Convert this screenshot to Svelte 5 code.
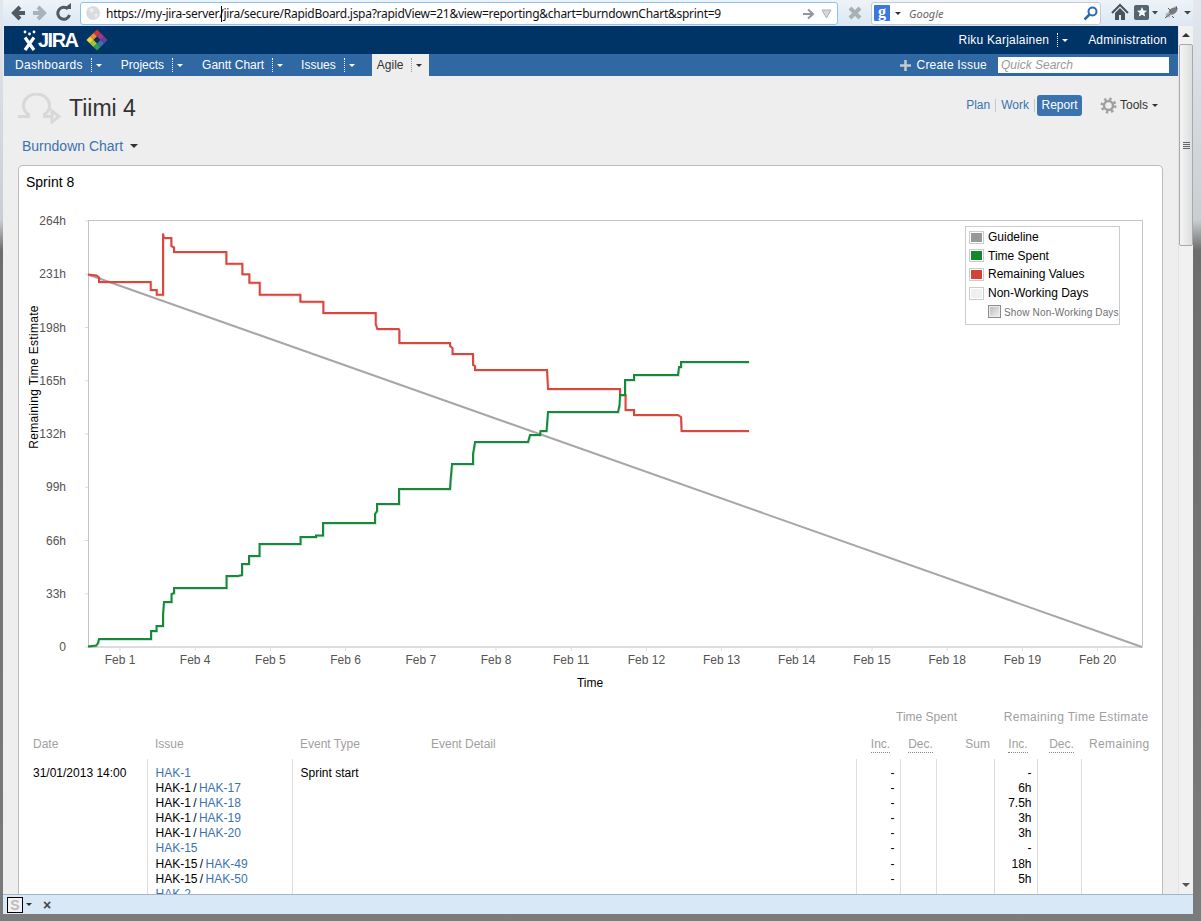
<script lang="ts">
	// Burndown report page inside a Firefox window. Chart is an svg drawn in page
	// coordinates (the group below shifts them into the card), legend sits on top of it.
	const navItems = ['Dashboards', 'Projects', 'Gantt Chart', 'Issues'];

	const yTicks = ['0', '33h', '66h', '99h', '132h', '165h', '198h', '231h', '264h'];
	const xTicks = [
		'Feb 1', 'Feb 4', 'Feb 5', 'Feb 6', 'Feb 7', 'Feb 8', 'Feb 11',
		'Feb 12', 'Feb 13', 'Feb 14', 'Feb 15', 'Feb 18', 'Feb 19', 'Feb 20'
	];

	const remaining =
		'88,274.5 96.5,275.5 99,277.5 99,282 150.7,282 150.7,290 156.7,290 156.7,294.7 163,294.7 163,233.5 163.7,238 171.3,238 171.3,246 174,247.3 174,252 226.3,252 226.3,263.7 242.3,263.7 242.3,274.3 249.3,274.3 249.3,282.7 259.7,282.7 259.7,294.7 300.3,294.7 300.3,301.7 323.3,301.7 323.3,313 375.7,313 375.7,324.3 377.3,329 398.7,329 399.3,330 399.3,343 450,343 450,346 452.5,348 452.5,354 473,354 473,365 475,366 475,370 547,370 547.5,380 548,389 620,389 620,395 625.5,395 625.5,410 634,410 634,415 678,415 681,417 681.5,431 749,431';
	const spent =
		'88,646.5 96,645.5 98,643 99,639 151,639 151,631 156.5,631 156.5,626 163,626 163,614 164,602 171.5,602 171.5,594 174,593 174,588 226.5,588 226.5,576 238,576 242,575 242,564 249,564 249,556 259.5,556 259.5,544 300.5,544 300.5,537 316,537 316,535.5 323,535.5 323,523 375,523 375,514 377,511 377,504 399,504 399,489 450,489 450.5,481 452,464 473,464 473,454 475,442 528,442 530,435 540,435 540.5,431 546.5,431 548,412 618,412 619.5,405 620,395 625,395 625,380 634,380 634,375 678,375 679,367 681,367 681,362 749,362';

	const legend = [
		{ label: 'Guideline', cls: 'grey' },
		{ label: 'Time Spent', cls: 'green' },
		{ label: 'Remaining Values', cls: 'red' },
		{ label: 'Non-Working Days', cls: 'blank' }
	];

	const rows = [
		{ parent: '', key: 'HAK-1', inc: '-', rem: '-' },
		{ parent: 'HAK-1', key: 'HAK-17', inc: '-', rem: '6h' },
		{ parent: 'HAK-1', key: 'HAK-18', inc: '-', rem: '7.5h' },
		{ parent: 'HAK-1', key: 'HAK-19', inc: '-', rem: '3h' },
		{ parent: 'HAK-1', key: 'HAK-20', inc: '-', rem: '3h' },
		{ parent: '', key: 'HAK-15', inc: '-', rem: '-' },
		{ parent: 'HAK-15', key: 'HAK-49', inc: '-', rem: '18h' },
		{ parent: 'HAK-15', key: 'HAK-50', inc: '-', rem: '5h' },
		{ parent: '', key: 'HAK-2', inc: '-', rem: '-' }
	];
</script>

<div class="window">
	<div class="toolbar">
		<svg class="tb-nav" width="74" height="26" viewBox="0 0 74 26">
			<path d="M20 13H10M15 7l-6 6 6 6" fill="none" stroke="#4f5a63" stroke-width="4" />
			<path d="M28 13h10M33 7l6 6-6 6" fill="none" stroke="#a9b2ba" stroke-width="4" />
			<path d="M63 9a6 6 0 1 0 1.500 6" fill="none" stroke="#4f5a63" stroke-width="3" />
			<path d="M58 9h8V3z" fill="#4f5a63" />
		</svg>
		<div class="urlbar">
			<svg class="globe" width="14" height="14" viewBox="0 0 14 14">
				<circle cx="7" cy="7" r="7" fill="#d9dcdf" />
				<path d="M3 3l4-1 1 3-3 2zM8 8l4 0-2 4z" fill="#eceef0" />
			</svg>
			<span class="url">https://my-jira-server/jira/secure/RapidBoard.jspa?rapidView=21&amp;view=reporting&amp;chart=burndownChart&amp;sprint=9</span>
			<span class="caret"></span>
			<svg class="url-go" width="30" height="12" viewBox="0 0 30 12">
				<path d="M0 6h9M5 1.500 10 6l-5 4.500" fill="none" stroke="#8f979e" stroke-width="2" />
				<path d="M19 2h9l-4.500 8z" fill="#d3d8dc" stroke="#aab1b7" />
			</svg>
		</div>
		<svg class="stop" width="14" height="14" viewBox="0 0 14 14">
			<path d="M2 2l10 10M12 2 2 12" stroke="#a9b0b6" stroke-width="4" />
		</svg>
		<div class="searchbar">
			<span class="engine">g</span>
			<span class="mini-arrow dark"></span>
			<span class="google">Google</span>
			<svg class="lens" width="15" height="15" viewBox="0 0 15 15">
				<circle cx="9.500" cy="5.500" r="4" fill="none" stroke="#2b6cab" stroke-width="2" />
				<path d="M6.500 8.500 1.500 13.500" stroke="#2b6cab" stroke-width="2.500" />
			</svg>
		</div>
		<svg class="tb-right" width="83" height="26" viewBox="0 0 83 26">
			<path d="M2 13 10 5l8 8" fill="none" stroke="#46525c" stroke-width="2" />
			<path d="M5 13v7h4v-5h2v5h4v-7l-5-5z" fill="#46525c" />
			<rect x="24" y="5" width="15" height="15" rx="2" fill="#566470" />
			<path d="M32 7l1.500 3.500 3.500.3-2.700 2.300.9 3.400-3.200-1.800-3.200 1.800.9-3.400-2.700-2.300 3.500-.3z" fill="#fff" />
			<path d="M42 11h6l-3 3.500z" fill="#3c464e" />
			<ellipse cx="63" cy="11" rx="5" ry="3" fill="#777b7f" transform="rotate(-35 63 11)" />
			<circle cx="58" cy="15" r="2.500" fill="#b4b7ba" />
			<path d="M55 18l5-4M66 6l1 3M58 8l3 3M62 16l2 2" stroke="#55595c" />
			<path d="M74 11h7l-3.500 3.500z" fill="#3c464e" />
		</svg>
	</div>

	<div class="content">
		<div class="page">
			<header class="topbar">
				<div class="logo">
					<svg width="15" height="21" viewBox="0 0 15 21">
						<circle cx="3" cy="2" r="1.400" fill="#fff" />
						<circle cx="7.500" cy="4" r="1.400" fill="#fff" />
						<circle cx="12" cy="2" r="1.400" fill="#fff" />
						<path d="M3 7.500 12 20M12 7.500 3 20" stroke="#fff" stroke-width="3.200" />
					</svg>
					<span class="logo-text">JIRA</span>
					<svg class="diamond" width="22" height="22" viewBox="-11 -11 22 22">
						<g transform="rotate(45) translate(-7.500 -7.500)">
							<rect x="0" y="0" width="5" height="5" fill="#d3343a" />
							<rect x="5" y="0" width="5" height="5" fill="#a33a86" />
							<rect x="10" y="0" width="5" height="5" fill="#6a3f98" />
							<rect x="0" y="5" width="5" height="5" fill="#ee8a2a" />
							<rect x="5" y="5" width="5" height="5" fill="#10305a" />
							<rect x="10" y="5" width="5" height="5" fill="#3d6fb5" />
							<rect x="0" y="10" width="5" height="5" fill="#f4d63c" />
							<rect x="5" y="10" width="5" height="5" fill="#a0c63c" />
							<rect x="10" y="10" width="5" height="5" fill="#2f9e50" />
						</g>
					</svg>
				</div>
				<div class="user">
					<span>Riku Karjalainen</span>
					<span class="divider"></span>
					<span class="mini-arrow"></span>
					<span class="admin">Administration</span>
				</div>
			</header>

			<nav class="mainnav">
				{#each navItems as item}
					<span class="nav-item">
						{item}
						<span class="divider"></span>
						<span class="mini-arrow"></span>
					</span>
				{/each}
				<span class="nav-item active">
					Agile
					<span class="divider"></span>
					<span class="mini-arrow dark"></span>
				</span>
				<span class="nav-right">
					<svg width="11" height="11" viewBox="0 0 11 11">
						<path d="M5.500 0v11M0 5.500h11" stroke="#c9c9c9" stroke-width="2.500" />
					</svg>
					<span class="create">Create Issue</span>
					<span class="quick">Quick Search</span>
				</span>
			</nav>

			<div class="board-head">
				<svg class="board-icon" width="44" height="31" viewBox="0 0 44 31">
					<path
						d="M0 23.500h12M12 22.500a13 11.500 0 1 1 13 0M25 23.500h9M34 18l7 5.500-7 5.500z"
						fill="none"
						stroke="#d8d8d8"
						stroke-width="3"
					/>
				</svg>
				<h1>Tiimi 4</h1>
				<div class="modes">
					<span class="mode">Plan</span>
					<span class="sep"></span>
					<span class="mode">Work</span>
					<span class="sep"></span>
					<span class="mode current">Report</span>
					<svg class="gear" width="17" height="17" viewBox="0 0 17 17">
						<circle cx="8.500" cy="8.500" r="6.500" fill="none" stroke="#a0a0a0" stroke-width="3" stroke-dasharray="2.300 2.800" />
						<circle cx="8.500" cy="8.500" r="4.500" fill="none" stroke="#a0a0a0" stroke-width="2.500" />
					</svg>
					<span class="tools">Tools</span>
					<span class="mini-arrow dark"></span>
				</div>
			</div>

			<div class="subnav">
				<span>Burndown Chart</span>
				<span class="mini-arrow dark wide"></span>
			</div>

			<section class="card">
				<h2>Sprint 8</h2>
				<div class="chart">
					<svg width="1143" height="498" viewBox="0 0 1143 498">
						<g transform="translate(-19 -205)">
							<rect x="88.500" y="220.500" width="1054" height="426" fill="#fff" stroke="#c4c4c4" />
							<path d="M88 647h1055" stroke="#dcdcdc" stroke-width="2" />
							{#each yTicks as label, i}
								<path d={`M85 ${647 - i * 53.25}h3`} stroke="#ddd" />
								<text class="tick" x="66" y={651 - i * 53.25} text-anchor="end">{label}</text>
							{/each}
							{#each xTicks as label, i}
								<path d={`M${120 + i * 75.2} 647v4`} stroke="#ddd" />
								<text class="tick" x={120 + i * 75.2} y="664" text-anchor="middle">{label}</text>
							{/each}
							<text class="axis spaced" transform="translate(38 377) rotate(-90)" text-anchor="middle">Remaining Time Estimate</text>
							<text class="axis" x="590" y="687" text-anchor="middle">Time</text>

							<path d="M88 274.500 1142 647" fill="none" stroke="#a8a6a6" stroke-width="2" />
							<polyline points={remaining} transform="translate(.7 .7)" class="halo red-line" />
							<polyline points={spent} transform="translate(.7 .7)" class="halo green-line" />
							<polyline points={remaining} class="line red-line" />
							<polyline points={spent} class="line green-line" />
						</g>
					</svg>
					<div class="legend">
						{#each legend as item}
							<div class="legend-row">
								<span class="swatch"><span class={item.cls}></span></span>
								{item.label}
							</div>
						{/each}
						<div class="legend-check">
							<span class="checkbox"></span>
							Show Non-Working Days
						</div>
					</div>
				</div>

				<table>
					<colgroup>
						<col class="c-date" /><col class="c-issue" /><col class="c-type" /><col class="c-detail" />
						<col class="c-inc" /><col class="c-dec" /><col class="c-sum" />
						<col class="c-rinc" /><col class="c-rdec" /><col class="c-rem" />
					</colgroup>
					<thead>
						<tr class="group-row">
							<th colspan="4"></th>
							<th colspan="3" class="mid group">Time Spent</th>
							<th colspan="3" class="mid group stretched">Remaining Time Estimate</th>
						</tr>
						<tr class="label-row">
							<th class="first">Date</th>
							<th>Issue</th>
							<th>Event Type</th>
							<th>Event Detail</th>
							<th class="mid dot"><span class="dotted">Inc.</span></th>
							<th class="mid dot"><span class="dotted">Dec.</span></th>
							<th class="end">Sum</th>
							<th class="mid dot"><span class="dotted">Inc.</span></th>
							<th class="mid dot"><span class="dotted">Dec.</span></th>
							<th class="stretched">Remaining</th>
						</tr>
					</thead>
					<tbody>
						<tr>
							<td class="first no-line">31/01/2013 14:00</td>
							<td>
								{#each rows as row}
									<div class="line-row">
										{#if row.parent}{row.parent}{' '}<span class="slash">/</span>{' '}{/if}<a href="#issue">{row.key}</a>
									</div>
								{/each}
							</td>
							<td>Sprint start</td>
							<td class="no-line"></td>
							<td class="num">
								{#each rows as row}<div class="line-row">{row.inc}</div>{/each}
							</td>
							<td></td>
							<td></td>
							<td class="num">
								{#each rows as row}<div class="line-row">{row.rem}</div>{/each}
							</td>
							<td></td>
							<td></td>
						</tr>
					</tbody>
				</table>
			</section>
		</div>

		<div class="scrollbar">
			<div class="sb-button"><span class="sb-up"></span></div>
			<div class="sb-thumb">
				<span></span><span></span><span></span><span></span>
			</div>
			<div class="sb-track"></div>
			<div class="sb-button"><span class="sb-down"></span></div>
		</div>
	</div>

	<footer class="statusbar">
		<span class="addon">S</span>
		<span class="mini-arrow dark"></span>
		<span class="close">×</span>
	</footer>
</div>

<style>
	:global(body) {
		margin: 0;
		background: #666;
	}
	.window {
		width: 1201px;
		height: 921px;
		box-sizing: border-box;
		padding: 0 8px 7px 3px;
		display: flex;
		flex-direction: column;
		overflow: hidden;
		font-family: 'Liberation Sans', Arial, sans-serif;
		font-size: 12px;
		background: linear-gradient(#e3e8ee 0, #c9ced3 220px, #6d6d6d 250px, #7b7b7b 100%);
	}

	/* browser chrome */
	.toolbar {
		height: 26px;
		flex: none;
		display: flex;
		align-items: center;
		background: linear-gradient(#eef3f8, #dbe7f3);
	}
	.tb-nav {
		margin-left: 2px;
		flex: none;
	}
	.urlbar {
		position: relative;
		width: 758px;
		height: 23px;
		margin-left: 1px;
		flex: none;
		display: flex;
		align-items: center;
		background: #fff;
		border: 1px solid #8cc3ee;
		border-radius: 3px;
		box-sizing: border-box;
	}
	.globe {
		margin-left: 5px;
		flex: none;
	}
	.url {
		margin-left: 6px;
		font-family: 'Noto Sans', sans-serif;
		font-size: 12px;
		letter-spacing: -0.28px;
		color: #111;
		white-space: nowrap;
	}
	.caret {
		position: absolute;
		left: 140px;
		top: 3px;
		width: 1px;
		height: 16px;
		background: #000;
	}
	.url-go {
		position: absolute;
		right: 4px;
		top: 5px;
	}
	.stop {
		margin-left: 10px;
		flex: none;
	}
	.searchbar {
		width: 230px;
		height: 23px;
		margin-left: 9px;
		flex: none;
		box-sizing: border-box;
		display: flex;
		align-items: center;
		background: #fff;
		border: 1px solid #c2ccd6;
		border-radius: 3px;
	}
	.engine {
		width: 16px;
		height: 16px;
		margin-left: 2px;
		background: #3a78e0;
		color: #fff;
		font: bold 16px/13px 'Liberation Serif', serif;
		text-align: center;
		border-radius: 1px;
	}
	.searchbar .mini-arrow {
		margin-left: 5px;
	}
	.google {
		margin-left: 8px;
		color: #666;
		font-style: italic;
		font-family: 'Noto Sans', sans-serif;
		font-size: 11px;
	}
	.lens {
		margin-left: auto;
		margin-right: 2px;
	}
	.tb-right {
		margin-left: 9px;
		flex: none;
	}

	.content {
		flex: 1;
		min-height: 0;
		display: flex;
		background: #eee;
	}
	.page {
		width: 1174px;
		margin-left: 1px;
		flex: none;
		overflow: hidden;
		background: #eee;
	}
	.scrollbar {
		width: 15px;
		flex: none;
		display: flex;
		flex-direction: column;
		background: #f1f1f1;
		box-sizing: border-box;
		border-left: 1px solid #e3e3e3;
	}
	.sb-button {
		height: 18px;
		flex: none;
		display: flex;
		align-items: center;
		justify-content: center;
	}
	.sb-up,
	.sb-down {
		width: 0;
		height: 0;
		border-left: 4px solid transparent;
		border-right: 4px solid transparent;
	}
	.sb-up {
		border-bottom: 4px solid #333;
	}
	.sb-down {
		border-top: 4px solid #555;
	}
	.sb-thumb {
		height: 202px;
		flex: none;
		box-sizing: border-box;
		border: 1px solid #a9a9a9;
		border-radius: 2px;
		background: linear-gradient(90deg, #f4f4f4, #dedede);
		display: flex;
		flex-direction: column;
		align-items: center;
		justify-content: center;
		gap: 1px;
	}
	.sb-thumb span {
		width: 7px;
		height: 1px;
		background: #666;
	}
	.sb-track {
		flex: 1;
	}
	.statusbar {
		height: 20px;
		flex: none;
		box-sizing: border-box;
		display: flex;
		align-items: center;
		background: #d9e8f7;
		border-top: 1px solid #a3b6c6;
		padding-left: 4px;
	}
	.addon {
		width: 14px;
		height: 14px;
		border: 1px solid #000;
		color: #bbb;
		font: bold 14px/14px 'Liberation Sans', sans-serif;
		text-align: center;
		background: #f2f2f2;
	}
	.statusbar .mini-arrow {
		margin-left: 3px;
	}
	.close {
		margin-left: 11px;
		font: bold 14px/14px 'Liberation Sans', sans-serif;
		color: #444;
	}

	/* jira header */
	.topbar {
		height: 28px;
		display: flex;
		align-items: center;
		justify-content: space-between;
		background: #003366;
		color: #fff;
	}
	.logo {
		display: flex;
		align-items: center;
		margin-left: 18px;
	}
	.logo-text {
		margin-left: 1px;
		font-size: 20px;
		font-weight: bold;
		letter-spacing: -1.500px;
	}
	.diamond {
		margin-left: 8px;
	}
	.user {
		display: flex;
		align-items: center;
		margin-right: 11px;
		letter-spacing: 0.2px;
	}
	.admin {
		margin-left: 20px;
	}
	.divider {
		width: 0;
		height: 14px;
		margin-left: 8px;
		border-left: 1px dotted #fff;
	}
	.mini-arrow {
		width: 0;
		height: 0;
		margin-left: 4px;
		flex: none;
		border-left: 3px solid transparent;
		border-right: 3px solid transparent;
		border-top: 3px solid #fff;
	}
	.mini-arrow.dark {
		border-top-color: #333;
	}
	.mini-arrow.wide {
		margin-left: 7px;
		border-left-width: 4px;
		border-right-width: 4px;
		border-top-width: 4px;
	}
	.mainnav {
		height: 22px;
		display: flex;
		align-items: center;
		background: #3068a4;
		color: #fff;
	}
	.nav-item {
		height: 100%;
		display: flex;
		align-items: center;
		padding: 0 7px 0 11px;
		white-space: nowrap;
	}
	.nav-item:first-child {
		letter-spacing: 0.3px;
		padding-right: 8px;
	}
	.nav-item:nth-child(2) {
		padding-right: 8px;
	}
	.nav-item.active {
		margin-left: 10px;
		padding: 0 7px 0 5px;
		background: #eee;
		color: #333;
	}
	.nav-item.active .divider {
		border-left-color: #999;
	}
	.nav-right {
		margin-left: auto;
		margin-right: 9px;
		display: flex;
		align-items: center;
	}
	.create {
		margin-left: 6px;
		letter-spacing: 0.2px;
	}
	.quick {
		width: 171px;
		height: 16px;
		margin-left: 11px;
		box-sizing: border-box;
		padding-left: 3px;
		background: #fff;
		color: #999;
		font-style: italic;
		line-height: 16px;
	}

	/* board header */
	.board-head {
		height: 32px;
		margin-top: 16px;
		padding: 0 20px 0 14px;
		display: flex;
		align-items: center;
	}
	.board-icon {
		flex: none;
	}
	h1 {
		margin: 0 0 0 7px;
		font-size: 23px;
		font-weight: normal;
		color: #333;
	}
	.modes {
		margin-left: auto;
		margin-top: -6px;
		display: flex;
		align-items: center;
	}
	.mode {
		padding: 4px;
		color: #3b73af;
		line-height: 13px;
	}
	.mode.current {
		padding: 4px 4px;
		margin-left: 1px;
		width: 37px;
		text-align: center;
		border-radius: 3px;
		background: #3b73af;
		color: #fff;
	}
	.sep {
		width: 1px;
		height: 13px;
		background: #c8c8c8;
		margin: 0 1px;
	}
	.gear {
		margin-left: 18px;
	}
	.tools {
		margin-left: 3px;
		color: #333;
	}
	.subnav {
		height: 16px;
		margin: 14px 0 0 18px;
		display: flex;
		align-items: center;
		color: #3b73af;
		font-size: 14px;
	}

	/* report card */
	.card {
		margin: 11px 15px 0 14px;
		background: #fff;
		border: 1px solid #bbb;
		border-bottom: 0;
		border-radius: 5px 5px 0 0;
	}
	h2 {
		margin: 0;
		padding: 8px 0 0 7px;
		font-size: 14px;
		line-height: 16px;
		font-weight: normal;
		color: #000;
	}
	.chart {
		position: relative;
		margin-top: 15px;
	}
	.chart svg {
		display: block;
	}
	.tick {
		font-size: 12px;
		fill: #545454;
	}
	.axis {
		font-size: 12px;
		fill: #000;
	}
	.spaced {
		letter-spacing: 0.3px;
	}
	.line,
	.halo {
		fill: none;
		stroke-linejoin: miter;
	}
	.line {
		stroke-width: 2;
	}
	.halo {
		stroke-width: 2;
		opacity: 0.25;
	}
	.red-line {
		stroke: #d9473f;
	}
	.green-line {
		stroke: #16893a;
	}
	.legend {
		position: absolute;
		left: 946px;
		top: 21px;
		width: 155px;
		height: 99px;
		box-sizing: border-box;
		padding-top: 1px;
		background: #fff;
		border: 1px solid #ccc;
		color: #000;
	}
	.legend-row {
		height: 18.600px;
		display: flex;
		align-items: center;
		gap: 4px;
		padding-left: 3px;
	}
	.swatch {
		width: 15px;
		height: 13px;
		box-sizing: border-box;
		border: 1px solid #ccc;
		padding: 1px;
		display: flex;
	}
	.swatch span {
		flex: 1;
	}
	.grey {
		background: #999;
	}
	.green {
		background: #14892c;
	}
	.red {
		background: #d04437;
	}
	.blank {
		background: #f0f0f0;
	}
	.legend-check {
		display: flex;
		align-items: flex-end;
		gap: 3px;
		margin-top: 3px;
		padding-left: 22px;
		font-size: 10px;
		letter-spacing: 0.15px;
		color: #707070;
		white-space: nowrap;
	}
	.checkbox {
		width: 13px;
		height: 13px;
		box-sizing: border-box;
		border: 1px solid #8a8a8a;
		background: linear-gradient(135deg, #b8b8b8, #f4f4f4);
		box-shadow: inset 0 0 0 1px #eee;
	}

	/* event table */
	table {
		width: 1129px;
		margin-left: 7px;
		table-layout: fixed;
		border-collapse: collapse;
		font-size: 12px;
		color: #000;
	}
	.c-date { width: 121px; }
	.c-issue { width: 145px; }
	.c-type { width: 131px; }
	.c-detail { width: 433px; }
	.c-inc { width: 44px; }
	.c-dec { width: 36px; }
	.c-sum { width: 58px; }
	.c-rinc { width: 43px; }
	.c-rdec { width: 44px; }
	.c-rem { width: 74px; }
	th {
		padding: 0 0 0 8px;
		font-weight: normal;
		text-align: left;
		color: #a0a0a0;
		white-space: nowrap;
	}
	th.first {
		padding-left: 7px;
	}
	th.mid {
		padding: 0;
		text-align: center;
	}
	th.group {
		padding-left: 3px;
	}
	th.end {
		padding: 0 4px 0 0;
		text-align: right;
	}
	th.stretched {
		letter-spacing: 0.35px;
	}
	.group-row {
		height: 27px;
	}
	.label-row {
		height: 29px;
	}
	.label-row th {
		padding-bottom: 2px;
	}
	.label-row th.dot {
		padding-left: 5px;
	}
	.dotted {
		padding-bottom: 1px;
		border-bottom: 1px dotted #888;
	}
	td {
		padding: 7px 7px 0 8px;
		vertical-align: top;
		border-left: 1px solid #ddd;
		white-space: nowrap;
	}
	td.first {
		padding-left: 7px;
	}
	td.no-line {
		border-left: 0;
	}
	td.num {
		text-align: right;
		padding-right: 5px;
	}
	.slash {
		margin: 0 -1px;
	}
	.line-row {
		height: 15.100px;
		line-height: 15px;
	}
	a {
		color: #3b73af;
		text-decoration: none;
	}
</style>
